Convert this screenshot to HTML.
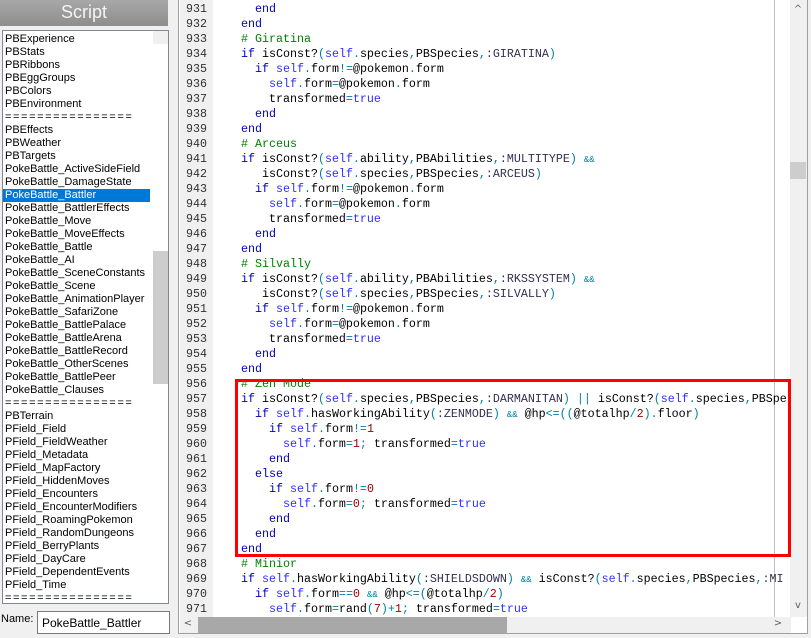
<!DOCTYPE html>
<html><head><meta charset="utf-8"><style>
*{margin:0;padding:0;box-sizing:border-box}
body{width:811px;height:638px;background:#f0f0f0;position:relative;overflow:hidden;font-family:"Liberation Sans",sans-serif}
.title{position:absolute;left:0;top:0;width:168px;height:26px;background:linear-gradient(#a8a8a8,#8e8e8e);color:#f4f4f4;font-size:18px;text-align:center;line-height:25px}
.list{position:absolute;left:2px;top:30px;width:167px;height:574px;background:#fff;border:1px solid #828790;overflow:hidden;padding-top:2px}
.list div{height:13px;line-height:13px;font-size:11px;padding-left:2px;color:#000;white-space:nowrap;width:147px}
.list div.eq{letter-spacing:1.6px}
.list div.sel{background:#0078d7;color:#fff}
.lsb{position:absolute;left:150px;top:0;width:16px;height:572px;background:#f0f0f0}
.lsb .th{position:absolute;left:0;top:220px;width:16px;height:133px;background:#cdcdcd}
.arr{position:absolute;font-size:10px;color:#606060;width:16px;text-align:center;font-family:"DejaVu Sans",sans-serif}
.name{position:absolute;left:1px;top:613px;font-size:11px}
.inp{position:absolute;left:37px;top:611px;width:133px;height:23px;background:#fff;border:1px solid #7a7a7a;font-size:12px;padding:4px 0 0 4px}
.code{position:absolute;left:178px;top:0;width:630px;height:634px;background:#fff;border:1px solid #a0a0a0;border-top:none;overflow:hidden}
.gut{position:absolute;left:1px;top:0;width:33px;height:617px;background:#f0f0f0}
.ln{position:absolute;left:0;width:638px;height:15px;line-height:15px;font-family:"Liberation Mono",monospace;font-size:11.67px;white-space:pre;color:#000;margin-top:1px}
.ln b{font-weight:normal;display:inline-block;width:28px;text-align:right;color:#303030;margin-right:6px;margin-left:0}
.k{color:#0000c0}.s{color:#3030ff}.p{color:#0080a0}.n{color:#a00000}.c{color:#008000}.y{color:#303050}
.guide{position:absolute;left:595px;top:0;width:1px;height:617px;background:#c0c0c0}
.vsb{position:absolute;left:611px;top:0;width:17px;height:617px;background:#f0f0f0}
.vsb .th{position:absolute;left:0;top:162px;width:16px;height:17px;background:#cdcdcd}
.hsb{position:absolute;left:1px;top:617px;width:611px;height:16px;background:#f0f0f0}
.hsb .th{position:absolute;left:18px;top:0;width:309px;height:16px;background:#a8a8a8}
.red{position:absolute;left:235px;top:379px;width:556px;height:178px;border:3px solid #ff0000}
</style></head><body>
<div class="title">Script</div>
<div class="list">
<div>PBExperience</div><div>PBStats</div><div>PBRibbons</div><div>PBEggGroups</div><div>PBColors</div><div>PBEnvironment</div><div class="eq">================</div><div>PBEffects</div><div>PBWeather</div><div>PBTargets</div><div>PokeBattle_ActiveSideField</div><div>PokeBattle_DamageState</div><div class="sel">PokeBattle_Battler</div><div>PokeBattle_BattlerEffects</div><div>PokeBattle_Move</div><div>PokeBattle_MoveEffects</div><div>PokeBattle_Battle</div><div>PokeBattle_AI</div><div>PokeBattle_SceneConstants</div><div>PokeBattle_Scene</div><div>PokeBattle_AnimationPlayer</div><div>PokeBattle_SafariZone</div><div>PokeBattle_BattlePalace</div><div>PokeBattle_BattleArena</div><div>PokeBattle_BattleRecord</div><div>PokeBattle_OtherScenes</div><div>PokeBattle_BattlePeer</div><div>PokeBattle_Clauses</div><div class="eq">================</div><div>PBTerrain</div><div>PField_Field</div><div>PField_FieldWeather</div><div>PField_Metadata</div><div>PField_MapFactory</div><div>PField_HiddenMoves</div><div>PField_Encounters</div><div>PField_EncounterModifiers</div><div>PField_RoamingPokemon</div><div>PField_RandomDungeons</div><div>PField_BerryPlants</div><div>PField_DayCare</div><div>PField_DependentEvents</div><div>PField_Time</div><div class="eq">================</div>
<div class="lsb"><div class="arr" style="top:2px">^</div><div class="th"></div><div class="arr" style="top:556px">v</div></div>
</div>
<div class="name">Name:</div>
<div class="inp">PokeBattle_Battler</div>
<div class="code">
<div class="gut"></div>
<div class="guide"></div>
<div class="ln" style="top:1px"><b>931</b>      <span class="k">end</span></div>
<div class="ln" style="top:16px"><b>932</b>    <span class="k">end</span></div>
<div class="ln" style="top:31px"><b>933</b>    <span class="c"># Giratina</span></div>
<div class="ln" style="top:46px"><b>934</b>    <span class="k">if</span> isConst?<span class="p">(</span><span class="s">self</span><span class="p">.</span>species<span class="p">,</span>PBSpecies<span class="p">,</span><span class="y">:GIRATINA</span><span class="p">)</span></div>
<div class="ln" style="top:61px"><b>935</b>      <span class="k">if</span> <span class="s">self</span><span class="p">.</span>form<span class="p">!=</span>@pokemon<span class="p">.</span>form</div>
<div class="ln" style="top:76px"><b>936</b>        <span class="s">self</span><span class="p">.</span>form<span class="p">=</span>@pokemon<span class="p">.</span>form</div>
<div class="ln" style="top:91px"><b>937</b>        transformed<span class="p">=</span><span class="s">true</span></div>
<div class="ln" style="top:106px"><b>938</b>      <span class="k">end</span></div>
<div class="ln" style="top:121px"><b>939</b>    <span class="k">end</span></div>
<div class="ln" style="top:136px"><b>940</b>    <span class="c"># Arceus</span></div>
<div class="ln" style="top:151px"><b>941</b>    <span class="k">if</span> isConst?<span class="p">(</span><span class="s">self</span><span class="p">.</span>ability<span class="p">,</span>PBAbilities<span class="p">,</span><span class="y">:MULTITYPE</span><span class="p">)</span> <span class="p" style="font-size:9px">&amp;&amp;</span></div>
<div class="ln" style="top:166px"><b>942</b>       isConst?<span class="p">(</span><span class="s">self</span><span class="p">.</span>species<span class="p">,</span>PBSpecies<span class="p">,</span><span class="y">:ARCEUS</span><span class="p">)</span></div>
<div class="ln" style="top:181px"><b>943</b>      <span class="k">if</span> <span class="s">self</span><span class="p">.</span>form<span class="p">!=</span>@pokemon<span class="p">.</span>form</div>
<div class="ln" style="top:196px"><b>944</b>        <span class="s">self</span><span class="p">.</span>form<span class="p">=</span>@pokemon<span class="p">.</span>form</div>
<div class="ln" style="top:211px"><b>945</b>        transformed<span class="p">=</span><span class="s">true</span></div>
<div class="ln" style="top:226px"><b>946</b>      <span class="k">end</span></div>
<div class="ln" style="top:241px"><b>947</b>    <span class="k">end</span></div>
<div class="ln" style="top:256px"><b>948</b>    <span class="c"># Silvally</span></div>
<div class="ln" style="top:271px"><b>949</b>    <span class="k">if</span> isConst?<span class="p">(</span><span class="s">self</span><span class="p">.</span>ability<span class="p">,</span>PBAbilities<span class="p">,</span><span class="y">:RKSSYSTEM</span><span class="p">)</span> <span class="p" style="font-size:9px">&amp;&amp;</span></div>
<div class="ln" style="top:286px"><b>950</b>       isConst?<span class="p">(</span><span class="s">self</span><span class="p">.</span>species<span class="p">,</span>PBSpecies<span class="p">,</span><span class="y">:SILVALLY</span><span class="p">)</span></div>
<div class="ln" style="top:301px"><b>951</b>      <span class="k">if</span> <span class="s">self</span><span class="p">.</span>form<span class="p">!=</span>@pokemon<span class="p">.</span>form</div>
<div class="ln" style="top:316px"><b>952</b>        <span class="s">self</span><span class="p">.</span>form<span class="p">=</span>@pokemon<span class="p">.</span>form</div>
<div class="ln" style="top:331px"><b>953</b>        transformed<span class="p">=</span><span class="s">true</span></div>
<div class="ln" style="top:346px"><b>954</b>      <span class="k">end</span></div>
<div class="ln" style="top:361px"><b>955</b>    <span class="k">end</span></div>
<div class="ln" style="top:376px"><b>956</b>    <span class="c"># Zen Mode</span></div>
<div class="ln" style="top:391px"><b>957</b>    <span class="k">if</span> isConst?<span class="p">(</span><span class="s">self</span><span class="p">.</span>species<span class="p">,</span>PBSpecies<span class="p">,</span><span class="y">:DARMANITAN</span><span class="p">)</span> <span class="p">||</span> isConst?<span class="p">(</span><span class="s">self</span><span class="p">.</span>species<span class="p">,</span>PBSpe</div>
<div class="ln" style="top:406px"><b>958</b>      <span class="k">if</span> <span class="s">self</span><span class="p">.</span>hasWorkingAbility<span class="p">(</span><span class="y">:ZENMODE</span><span class="p">)</span> <span class="p" style="font-size:9px">&amp;&amp;</span> @hp<span class="p">&lt;=((</span>@totalhp<span class="p">/</span><span class="n">2</span><span class="p">).</span>floor<span class="p">)</span></div>
<div class="ln" style="top:421px"><b>959</b>        <span class="k">if</span> <span class="s">self</span><span class="p">.</span>form<span class="p">!=</span><span class="n">1</span></div>
<div class="ln" style="top:436px"><b>960</b>          <span class="s">self</span><span class="p">.</span>form<span class="p">=</span><span class="n">1</span><span class="p">;</span> transformed<span class="p">=</span><span class="s">true</span></div>
<div class="ln" style="top:451px"><b>961</b>        <span class="k">end</span></div>
<div class="ln" style="top:466px"><b>962</b>      <span class="k">else</span></div>
<div class="ln" style="top:481px"><b>963</b>        <span class="k">if</span> <span class="s">self</span><span class="p">.</span>form<span class="p">!=</span><span class="n">0</span></div>
<div class="ln" style="top:496px"><b>964</b>          <span class="s">self</span><span class="p">.</span>form<span class="p">=</span><span class="n">0</span><span class="p">;</span> transformed<span class="p">=</span><span class="s">true</span></div>
<div class="ln" style="top:511px"><b>965</b>        <span class="k">end</span></div>
<div class="ln" style="top:526px"><b>966</b>      <span class="k">end</span></div>
<div class="ln" style="top:541px"><b>967</b>    <span class="k">end</span></div>
<div class="ln" style="top:556px"><b>968</b>    <span class="c"># Minior</span></div>
<div class="ln" style="top:571px"><b>969</b>    <span class="k">if</span> <span class="s">self</span><span class="p">.</span>hasWorkingAbility<span class="p">(</span><span class="y">:SHIELDSDOWN</span><span class="p">)</span> <span class="p" style="font-size:9px">&amp;&amp;</span> isConst?<span class="p">(</span><span class="s">self</span><span class="p">.</span>species<span class="p">,</span>PBSpecies<span class="p">,</span><span class="y">:MI</span></div>
<div class="ln" style="top:586px"><b>970</b>      <span class="k">if</span> <span class="s">self</span><span class="p">.</span>form<span class="p">==</span><span class="n">0</span> <span class="p" style="font-size:9px">&amp;&amp;</span> @hp<span class="p">&lt;=(</span>@totalhp<span class="p">/</span><span class="n">2</span><span class="p">)</span></div>
<div class="ln" style="top:601px"><b>971</b>        <span class="s">self</span><span class="p">.</span>form<span class="p">=</span>rand<span class="p">(</span><span class="n">7</span><span class="p">)+</span><span class="n">1</span><span class="p">;</span> transformed<span class="p">=</span><span class="s">true</span></div>
<div class="vsb"><div class="arr" style="top:4px">^</div><div class="th"></div><div class="arr" style="top:600px">v</div></div>
<div class="hsb"><div class="arr" style="top:1px;left:0">&lt;</div><div class="th"></div><div class="arr" style="top:1px;left:590px">&gt;</div></div>
</div>
<div class="red"></div>
</body></html>
